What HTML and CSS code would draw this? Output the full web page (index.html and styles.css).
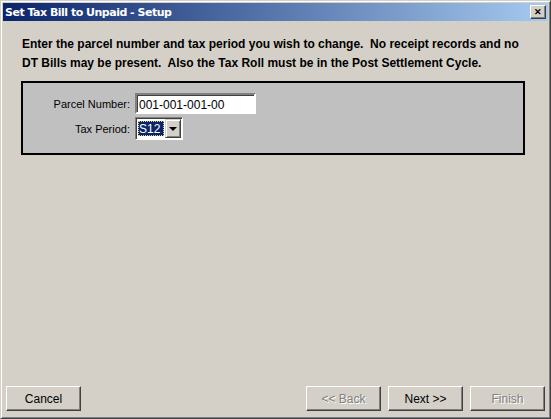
FILE: index.html
```html
<!DOCTYPE html>
<html lang="en">
<head>
    <meta charset="UTF-8">
    <title>Set Tax Bill to Unpaid - Setup</title>
    <link rel="stylesheet" href="styles.css">
</head>
<body>
    <div class="window">
        <div class="titlebar">
            <span class="title">Set Tax Bill to Unpaid - Setup</span>
            <span class="close">&#x2715;</span>
        </div>

        <div class="content">
            <p class="intro">
                Enter the parcel number and tax period you wish to change.&nbsp; No receipt records and no<br>
                DT Bills may be present.&nbsp; Also the Tax Roll must be in the Post Settlement Cycle.
            </p>

            <div class="panel">
                <div class="row">
                    <label class="label">Parcel Number:</label>
                    <div class="textbox">001-001-001-00</div>
                </div>
                <div class="row">
                    <label class="label">Tax Period:</label>
                    <div class="combo">
                        <span class="combo-value"><span>S12</span></span>
                        <span class="combo-btn"><span class="arrow"></span></span>
                    </div>
                </div>
            </div>
        </div>

        <div class="buttons">
            <button class="btn">Cancel</button>
            <div class="nav">
                <button class="btn disabled">&lt;&lt; Back</button>
                <button class="btn">Next &gt;&gt;</button>
                <button class="btn disabled">Finish</button>
            </div>
        </div>
    </div>
</body>
</html>
```

FILE: styles.css
```css
:root
{
    --face: #d4d0c8;
    --panel: #c0c0c0;
    --shadow: #808080;
    --dark: #404040;
    --highlight: #0a246a;
}

*
{
    margin: 0;
    padding: 0;
    box-sizing: border-box;
}

body
{
    width: 551px;
    height: 419px;
    overflow: hidden;
    background-color: var(--face);
    font-family: "Liberation Sans", Arial, sans-serif;
    font-size: 12px;
}

.window
{
    display: flex;
    flex-flow: column nowrap;
    width: 551px;
    height: 419px;
    padding: 2px;
    border: 1px solid;
    border-color: var(--face) var(--dark) var(--dark) var(--face);
    box-shadow: inset 1px 1px #fff, inset -1px -1px var(--shadow);
    background-color: var(--face);
}

.titlebar
{
    display: flex;
    align-items: center;
    justify-content: space-between;
    height: 18px;
    padding: 0 2px 0 2px;
    background: linear-gradient(to right, #0a246a, #a6caf0);
}

.title
{
    color: #fff;
    font-family: "DejaVu Sans", sans-serif;
    font-weight: bold;
    font-size: 11px;
    letter-spacing: -0.5px;
}

.close
{
    display: flex;
    justify-content: center;
    align-items: center;
    width: 16px;
    height: 14px;
    background-color: var(--face);
    border: 1px solid;
    border-color: #fff var(--dark) var(--dark) #fff;
    box-shadow: inset -1px -1px var(--shadow);
    font-size: 9px;
    font-weight: bold;
    color: #000;
}

.content
{
    flex: 1;
    padding: 14px 23px 0 18px;
}

.intro
{
    font-family: "Liberation Sans", Arial, sans-serif;
    font-weight: bold;
    font-size: 12px;
    line-height: 19px;
    color: #000;
    padding-left: 1px;
    white-space: nowrap;
}

.panel
{
    display: flex;
    flex-flow: column nowrap;
    gap: 3px;
    margin-top: 8px;
    height: 74px;
    padding: 10px 0 0 0;
    background-color: var(--panel);
    border: 2px solid #000;
}

.row
{
    display: flex;
    align-items: center;
    gap: 5px;
}

.label
{
    width: 107px;
    text-align: right;
    font-size: 11px;
    color: #000;
}

.textbox
{
    width: 121px;
    height: 21px;
    padding: 3px 0 0 2px;
    background-color: #fff;
    border: 2px solid;
    border-color: var(--shadow) #fff #fff var(--shadow);
    box-shadow: inset 1px 1px var(--dark);
    font-size: 12px;
    color: #000;
}

.combo
{
    display: flex;
    width: 48px;
    height: 23px;
    padding: 1px;
    background-color: #fff;
    border: 1px solid;
    border-color: var(--shadow) #fff #fff var(--shadow);
    box-shadow: inset 1px 1px var(--dark);
}

.combo-value
{
    flex: 1;
    padding: 2px 1px 2px 1px;
}

.combo-value > span
{
    display: block;
    height: 100%;
    padding: 1px 0 0 1px;
    background-color: var(--highlight);
    color: #fff;
    outline: 1px dotted #e0d080;
    outline-offset: -1px;
    font-size: 12px;
}

.combo-btn
{
    display: flex;
    justify-content: center;
    align-items: center;
    width: 16px;
    background-color: var(--face);
    border: 1px solid;
    border-color: var(--face) var(--dark) var(--dark) var(--face);
    box-shadow: inset 1px 1px #fff, inset -1px -1px var(--shadow);
}

.arrow
{
    width: 0;
    height: 0;
    border-left: 4px solid transparent;
    border-right: 4px solid transparent;
    border-top: 4px solid #000;
}

.buttons
{
    display: flex;
    justify-content: space-between;
    padding: 0 3px 5px 3px;
}

.nav
{
    display: flex;
    gap: 7px;
}

.btn
{
    width: 75px;
    height: 25px;
    background-color: var(--face);
    border: 1px solid;
    border-color: #fff var(--dark) var(--dark) #fff;
    box-shadow: inset -1px -1px var(--shadow);
    font-family: "Liberation Sans", Arial, sans-serif;
    font-size: 12px;
    color: #000;
}

.btn.disabled
{
    color: var(--shadow);
    text-shadow: 1px 1px #fff;
}
```
